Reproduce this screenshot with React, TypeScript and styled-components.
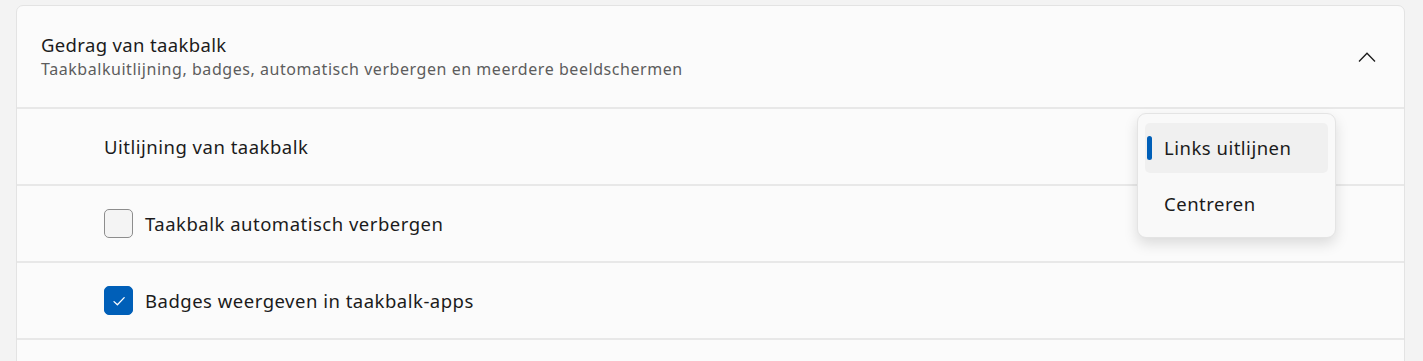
import React from 'react';
import styled, { createGlobalStyle } from 'styled-components';

const GlobalStyle = createGlobalStyle`
  html, body {
    margin: 0;
    padding: 0;
    background: #f3f3f3;
    font-family: "Noto Sans", "Open Sans", sans-serif;
    color: #1b1b1b;
    overflow: hidden;
  }
`;

const Page = styled.div`
  padding: 5px 18px 0 16px;
  height: 361px;
  box-sizing: border-box;
  overflow: hidden;
`;

const Card = styled.section`
  position: relative;
  background: #fbfbfb;
  border: 1px solid #e3e3e3;
  border-radius: 7px;
  height: 400px;
`;

const Header = styled.div`
  height: 101px;
  display: flex;
  align-items: center;
  justify-content: space-between;
  padding: 0 28px 0 24px;
  border-bottom: 2px solid #e8e8e8;
`;

const TitleBlock = styled.div`
  display: flex;
  flex-direction: column;
  gap: 2px;
`;

const Title = styled.div`
  font-size: 18.5px;
  line-height: 24px;
  letter-spacing: 0.35px;
  color: #1b1b1b;
`;

const Subtitle = styled.div`
  font-size: 16px;
  line-height: 21px;
  letter-spacing: 0.55px;
  color: #5d5d5d;
`;

const Row = styled.div`
  height: 75px;
  display: flex;
  align-items: center;
  gap: 12px;
  padding-left: 87px;
  border-bottom: 2px solid #e8e8e8;
  font-size: 18.5px;
  letter-spacing: 0.5px;
`;

const Box = styled.span<{ $checked?: boolean }>`
  width: 29px;
  height: 29px;
  box-sizing: border-box;
  border-radius: 5px;
  display: flex;
  align-items: center;
  justify-content: center;
  background: ${({ $checked }) => ($checked ? '#005fb8' : '#f4f4f4')};
  border: 1px solid ${({ $checked }) => ($checked ? '#005fb8' : '#8d8d8d')};
`;

const Menu = styled.div`
  position: absolute;
  top: 107px;
  left: 1120px;
  width: 199px;
  height: 125px;
  box-sizing: border-box;
  padding: 9px 7px;
  background: #f9f9f9;
  border: 1px solid #e4e4e4;
  border-radius: 9px;
  box-shadow: 0 6px 14px rgba(0, 0, 0, 0.13);
  display: flex;
  flex-direction: column;
  gap: 6px;
`;

const Item = styled.div<{ $selected?: boolean }>`
  position: relative;
  height: 50px;
  display: flex;
  align-items: center;
  padding-left: 19px;
  border-radius: 5px;
  font-size: 18.5px;
  letter-spacing: 0.5px;
  background: ${({ $selected }) => ($selected ? '#f0f0f0' : 'transparent')};

  &::before {
    content: '';
    display: ${({ $selected }) => ($selected ? 'block' : 'none')};
    position: absolute;
    left: 2px;
    top: 13px;
    width: 5px;
    height: 24px;
    border-radius: 3px;
    background: #005fb8;
  }
`;

const Chevron = () => (
  <svg width="18" height="12" viewBox="0 0 18 12">
    <path d="M1 10.5 L9 2.2 L17 10.5" fill="none" stroke="#1b1b1b" strokeWidth="1.3" />
  </svg>
);

const Check = () => (
  <svg width="16" height="16" viewBox="0 0 16 16">
    <path d="M3 8.6 L6.4 11.8 L13.2 4.6" fill="none" stroke="#fff" strokeWidth="1.3" strokeLinecap="round" strokeLinejoin="round" />
  </svg>
);

const App: React.FC = () => (
  <>
    <GlobalStyle />
    <Page>
      <Card>
        <Header>
          <TitleBlock>
            <Title>Gedrag van taakbalk</Title>
            <Subtitle>Taakbalkuitlijning, badges, automatisch verbergen en meerdere beeldschermen</Subtitle>
          </TitleBlock>
          <Chevron />
        </Header>
        <Row>Uitlijning van taakbalk</Row>
        <Row>
          <Box />
          Taakbalk automatisch verbergen
        </Row>
        <Row>
          <Box $checked>
            <Check />
          </Box>
          Badges weergeven in taakbalk-apps
        </Row>
        <Menu>
          <Item $selected>Links uitlijnen</Item>
          <Item>Centreren</Item>
        </Menu>
      </Card>
    </Page>
  </>
);

export default App;
